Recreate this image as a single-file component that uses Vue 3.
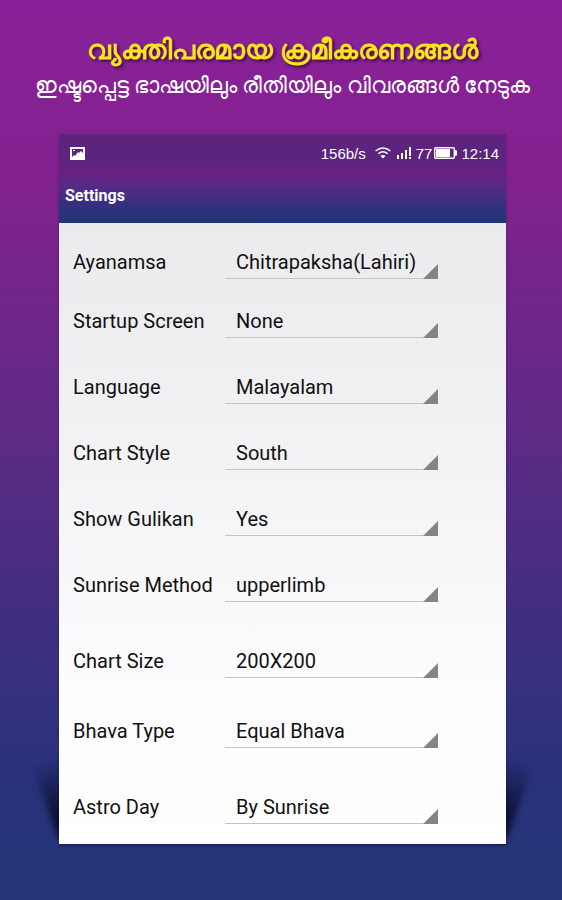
<script setup>
import {ref} from 'vue';
const settings = ref([
    { id: 'ayanamsa', label: 'Ayanamsa', value: 'Chitrapaksha(Lahiri)', options: ['Chitrapaksha(Lahiri)', 'Raman', 'Krishnamurti'], size: 'first' },
    { id: 'startup', label: 'Startup Screen', value: 'None', options: ['None', 'Horoscope', 'Panchanga'], size: 'short' },
    { id: 'language', label: 'Language', value: 'Malayalam', options: ['Malayalam', 'English', 'Hindi'], size: 'normal' },
    { id: 'style', label: 'Chart Style', value: 'South', options: ['South', 'North', 'East'], size: 'normal' },
    { id: 'gulikan', label: 'Show Gulikan', value: 'Yes', options: ['Yes', 'No'], size: 'normal' },
    { id: 'sunrise', label: 'Sunrise Method', value: 'upperlimb', options: ['upperlimb', 'center'], size: 'normal' },
    { id: 'size', label: 'Chart Size', value: '200X200', options: ['200X200', '300X300'], size: 'tall' },
    { id: 'bhava', label: 'Bhava Type', value: 'Equal Bhava', options: ['Equal Bhava', 'Sripati'], size: 'medium' },
    { id: 'day', label: 'Astro Day', value: 'By Sunrise', options: ['By Sunrise', 'By Midnight'], size: 'tall' },
])
</script>

<template>
    <main class="page">
        <header class="intro">
            <h1>വ്യക്തിപരമായ ക്രമീകരണങ്ങള്‍</h1>
            <p>ഇഷ്ടപ്പെട്ട ഭാഷയിലും രീതിയിലും വിവരങ്ങള്‍ നേടുക</p>
        </header>
        <div class="phone">
            <section class="screen">
                <div class="status">
                    <svg class="picture" width="15" height="13" viewBox="0 0 15 13">
                        <path fill="#fff" fill-rule="evenodd" d="M0 0h15v13H0zM2 2v8l2-2 1 1 3-4 1 1 2-2 2 2V2z" />
                        <path fill="#fff" d="M3 3h2v1H3z" />
                    </svg>
                    <span class="speed">156b/s</span>
                    <svg class="wifi" width="16" height="12" viewBox="0 0 16 12" fill="none" stroke="#fff" stroke-width="1.5">
                        <path d="M.6 4Q8-2 15.4 4M3.3 6.8Q8 2.8 12.7 6.8" />
                        <path fill="#fff" stroke="none" d="M5.5 9Q8 7 10.5 9L8 11.5z" />
                    </svg>
                    <svg class="signal" width="14" height="12" viewBox="0 0 14 12" fill="#fff">
                        <path d="M0 8h2v4H0zM4 6h2v6H4zM8 3h2v9H8zM12 0h2v9h-2zM12 10h2v2h-2z" />
                    </svg>
                    <span>77</span>
                    <svg class="battery" width="23" height="12" viewBox="0 0 23 12">
                        <rect x=".7" y=".7" width="19.6" height="10.6" rx="1" fill="none" stroke="#fff" stroke-width="1.4" />
                        <path fill="#fff" d="M2 2h14v8H2zM20 3h2l1 1v4l-1 1h-2z" />
                    </svg>
                    <span>12:14</span>
                </div>
                <h2>Settings</h2>
                <form class="list">
                    <div v-for="item in settings" :key="item.id" class="row" :class="item.size">
                        <label :for="item.id">{{ item.label }}</label>
                        <div class="spinner">
                            <select :id="item.id" v-model="item.value">
                                <option v-for="option in item.options" :key="option">{{ option }}</option>
                            </select>
                        </div>
                    </div>
                </form>
            </section>
        </div>
    </main>
</template>

<style>
body {
    margin: 0;
}
</style>

<style scoped>
.page {
    min-height: 100vh;
    box-sizing: border-box;
    padding: 32px 56px 56px 59px;
    background: linear-gradient(#8b2199 0%, #82218f 20%, #5b2b85 50%, #35307f 77%, #27327b 88%, #253577 100%);
    font-family: Roboto, "Liberation Sans", sans-serif;
}

.intro {
    height: 102px;
    margin: 0 -40px;
    text-align: center;
    color: #fff;
    white-space: nowrap;
}

h1 {
    margin: 0;
    font-size: 27px;
    line-height: 36px;
    font-weight: 700;
    color: #ffe21f;
    text-shadow: 2px 2px 3px #3d0b4a;
}

p {
    margin: 0;
    font-size: 22px;
    line-height: 36px;
}

.phone {
    position: relative;
    z-index: 0;
}

/* curled corner shadows behind the card */
.phone::before,
.phone::after {
    content: "";
    position: absolute;
    z-index: -1;
    bottom: 4px;
    width: 40px;
    height: 80px;
    background: linear-gradient(transparent, #0a1030 75%);
    filter: blur(3px);
}

.phone::before {
    left: 0;
    transform: rotate(-20deg);
    transform-origin: 0 100%;
}

.phone::after {
    right: 0;
    transform: rotate(20deg);
    transform-origin: 100% 100%;
}

.screen {
    background: #fff;
    box-shadow: 0 2px 3px -1px rgba(8, 16, 48, 0.7);
}

.status {
    display: flex;
    align-items: center;
    height: 38px;
    padding: 0 7px 0 11px;
    background: linear-gradient(#5d247d 0%, #5c247f 80%, #6e2084 100%);
    color: #fff;
    font-family: "Liberation Sans", sans-serif;
    font-size: 15px;
}

.speed {
    margin-left: auto;
}

.wifi {
    margin: 0 6px 0 9px;
}

.signal {
    margin-right: 5px;
}

.battery {
    margin: 0 4px 0 2px;
}

h2 {
    margin: 0;
    padding: 0 6px 3px;
    font-size: 16px;
    line-height: 48px;
    font-weight: 700;
    color: #fff;
    background: linear-gradient(#6a2085 0%, #582a87 25%, #343080 65%, #213575 100%);
}

.list {
    padding: 0 68px 20px 14px;
    background: linear-gradient(#ebebed 0%, #f3f2f5 40%, #fdfcfe 75%, #fff 100%);
    font-size: 20px;
    color: #111;
}

.row {
    display: grid;
    grid-template-columns: 152px 1fr;
    align-items: end;
    height: 66px;
}

.first {
    height: 56px;
}

.short {
    height: 59px;
}

.medium {
    height: 70px;
}

.tall {
    height: 76px;
}

label {
    line-height: 34px;
    white-space: nowrap;
}

.spinner {
    position: relative;
    border-bottom: 1px solid #c4c3c6;
}

.spinner::after {
    content: "";
    position: absolute;
    right: 0;
    bottom: -1px;
    width: 15px;
    height: 15px;
    background: #848385;
    clip-path: polygon(100% 0, 100% 100%, 0 100%);
    pointer-events: none;
}

select {
    display: block;
    width: 100%;
    height: 34px;
    padding: 2px 0 0 11px;
    appearance: none;
    border: 0;
    outline: none;
    background: transparent;
    color: inherit;
    font: inherit;
    cursor: pointer;
}
</style>
